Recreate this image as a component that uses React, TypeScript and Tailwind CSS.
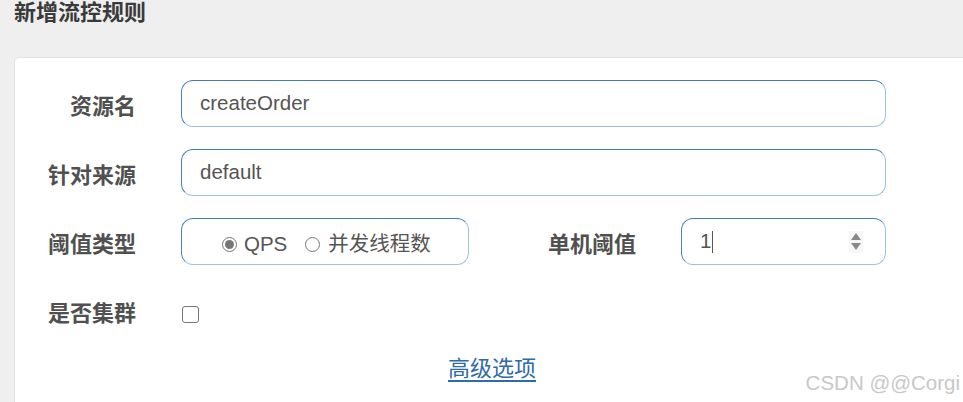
import React from "react";

const font = { fontFamily: '"Liberation Sans", Arial, "Noto Sans CJK SC", sans-serif' };

function Label({ children, w }: { children: React.ReactNode; w: string }) {
  return (
    <div className={`${w} shrink-0 text-right text-[22px] font-bold text-[#505050] pt-[7px] leading-[22px]`}>
      {children}
    </div>
  );
}

const inputBox =
  "h-[47px] rounded-[12px] border border-t-[#3f7cb8] border-l-[#4a84bd] border-r-[#9ec0e3] border-b-[#9ec0e3] bg-white flex items-center";

export default function App() {
  return (
    <div className="w-[963px] h-[402px] overflow-hidden bg-[#efefef] relative" style={font}>
      <div className="pl-[14px] pt-[2px] h-[57px] text-[22px] leading-[22px] font-bold text-[#3a3a3a]">新增流控规则</div>
      <div className="ml-[14px] w-[956px] h-[360px] bg-white rounded-[5px] border border-[#e2e2e2] pt-[22px]">
        <div className="flex flex-col gap-[22px]">
          <div className="flex items-center">
            <Label w="w-[121px]">资源名</Label>
            <div className={`${inputBox} ml-[45px] w-[705px] px-[18px] text-[20.5px] text-[#555]`}>createOrder</div>
          </div>
          <div className="flex items-center">
            <Label w="w-[121px]">针对来源</Label>
            <div className={`${inputBox} ml-[45px] w-[705px] px-[18px] text-[20.5px] text-[#555]`}>default</div>
          </div>
          <div className="flex items-center">
            <Label w="w-[121px]">阈值类型</Label>
            <div className={`${inputBox} ml-[45px] w-[288px] pl-[40px] text-[20.5px] text-[#555]`}>
              <div className="flex items-center pt-[6px]">
                <span className="w-[15px] h-[15px] rounded-full border-[1.5px] border-[#777] flex items-center justify-center mr-[7px]">
                  <span className="w-[9px] h-[9px] rounded-full bg-[#777]" />
                </span>
                <span>QPS</span>
                <span className="ml-[18px] w-[15px] h-[15px] rounded-full border-[1.5px] border-[#777] mr-[8px]" />
                <span>并发线程数</span>
              </div>
            </div>
            <Label w="w-[167px]">单机阈值</Label>
            <div className={`${inputBox} ml-[45px] w-[205px] pl-[18px] pr-[22px] text-[20.5px] text-[#555] justify-between`}>
              <span className="flex items-center">
                1<span className="inline-block w-px h-[22px] bg-[#555] ml-[1px]" />
              </span>
              <span className="w-[14px] h-[22px] bg-[#f6f6f6] flex flex-col items-center justify-center gap-[3px]">
                <svg width="10" height="7" viewBox="0 0 10 7"><path d="M5 0 L10 7 L0 7 Z" fill="#888" /></svg>
                <svg width="10" height="7" viewBox="0 0 10 7"><path d="M0 0 L10 0 L5 7 Z" fill="#888" /></svg>
              </span>
            </div>
          </div>
          <div className="flex items-center h-[47px]">
            <Label w="w-[121px]">是否集群</Label>
            <div className="ml-[46px] mt-[7px] w-[17px] h-[17px] rounded-[3px] border-[1.5px] border-[#777] bg-white" />
          </div>
        </div>
        <div className="mt-[23px] text-center">
          <span className="text-[22px] leading-[24px] text-[#2f6ba8] underline underline-offset-[4px]">高级选项</span>
        </div>
      </div>
      <div className="absolute right-[3px] bottom-[9px] text-[20.5px] text-[#c8c8c8] leading-[20px]">CSDN @@Corgi</div>
    </div>
  );
}
